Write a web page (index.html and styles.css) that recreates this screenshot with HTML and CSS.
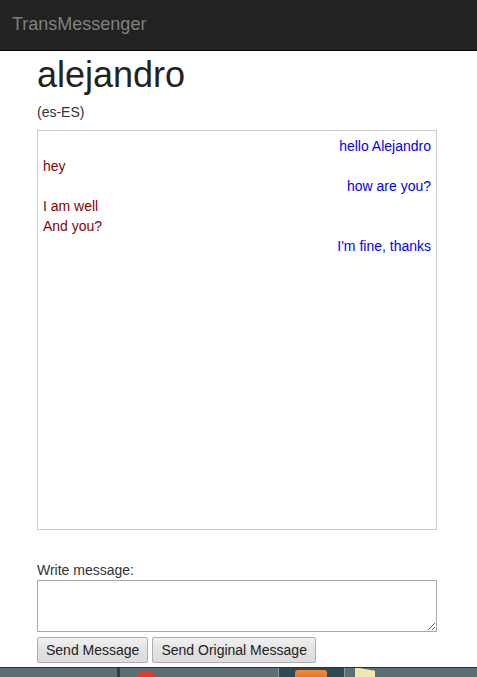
FILE: index.html
```html
<!DOCTYPE html>
<html>
<head>
<meta charset="utf-8">
<title>TransMessenger</title>
<link rel="stylesheet" href="styles.css">
</head>
<body>
<nav class="navbar"><span class="brand">TransMessenger</span></nav>
<main class="container">
  <h1 class="title">alejandro</h1>
  <p class="lang">(es-ES)</p>
  <div class="chat">
    <div class="msg out">hello Alejandro</div>
    <div class="msg in">hey</div>
    <div class="msg out">how are you?</div>
    <div class="msg in">I am well</div>
    <div class="msg in">And you?</div>
    <div class="msg out">I'm fine, thanks</div>
  </div>
  <form class="compose">
    <label class="label" for="m">Write message:</label>
    <textarea id="m" class="input"></textarea>
    <div class="buttons">
      <button type="button" class="btn">Send Message</button>
      <button type="button" class="btn">Send Original Message</button>
    </div>
  </form>
</main>
<div class="taskbar">
  <div class="tb-seg tb-a"></div>
  <div class="tb-seg tb-b"><span class="tb-red"></span></div>
  <div class="tb-seg tb-c"><span class="tb-orange"></span></div>
  <div class="tb-seg tb-d"><span class="tb-env"></span></div>
</div>
</body>
</html>
```
FILE: styles.css
```css
* { box-sizing: border-box; }
html, body { margin: 0; padding: 0; }
body {
  font-family: "Liberation Sans", Arial, sans-serif;
  font-size: 14px;
  line-height: 20px;
  color: #333;
  background: #fff;
  height: 677px;
  overflow: hidden;
}
.navbar {
  height: 51px;
  background: #222;
  border-bottom: 1px solid #080808;
  display: flex;
  align-items: center;
  padding: 0 12px;
}
.brand {
  color: #808080;
  font-size: 18px;
  line-height: 20px;
  margin-top: -2px;
}
.container {
  padding: 0 40px 0 37px;
}
.title {
  margin: 4px 0 0;
  font-size: 36px;
  font-weight: 500;
  line-height: 40px;
  color: #222;
}
.lang {
  margin: 7px 0 0;
  line-height: 20px;
}
.chat {
  margin-top: 8px;
  height: 400px;
  border: 1px solid #ccc;
  padding: 5px;
}
.msg { line-height: 20px; }
.out { text-align: right; color: #0000ff; }
.in { color: #8b0000; }
.compose {
  margin-top: 30px;
  display: flex;
  flex-direction: column;
}
.label {
  line-height: 20px;
  color: #333;
}
.input {
  display: block;
  width: 400px;
  height: 52px;
  margin: 0;
  border: 1px solid #a9a9a9;
  resize: both;
  font-family: inherit;
}
.buttons {
  display: flex;
  gap: 4px;
  margin-top: 5px;
}
.btn {
  height: 26px;
  padding: 0 8px;
  font-family: "Liberation Sans", Arial, sans-serif;
  font-size: 14px;
  color: #222;
  border: 1px solid #adadad;
  border-radius: 2px;
  background: linear-gradient(#f2f2f2, #e2e2e2 50%, #dcdcdc);
}
.taskbar {
  position: fixed;
  left: 0;
  right: 0;
  bottom: 0;
  height: 10px;
  display: flex;
  background: #2c3e44;
  border-top: 1px solid #24343a;
  overflow: hidden;
}
.tb-seg { position: relative; height: 100%; flex: none; }
.tb-a { width: 120px; background: #5b6e72; border-right: 3px solid #2e3f44; }
.tb-b { width: 159px; background: #5b6e72; border-right: 1px solid #8a9a9e; }
.tb-c { width: 66px; background: #2f4a52; border-right: 1px solid #8a9a9e; }
.tb-d { flex: 1; background: #5b6e72; }
.tb-red {
  position: absolute; left: 14px; top: 3px;
  width: 24px; height: 24px; border-radius: 50%;
  background: #e23a2c;
}
.tb-orange {
  position: absolute; left: 16px; top: 2px;
  width: 32px; height: 20px; border-radius: 3px;
  background: linear-gradient(#f08a3a, #d2561a);
}
.tb-env {
  position: absolute; left: 10px; top: 1px;
  width: 20px; height: 14px;
  background: #f3e7b0;
  transform: skewY(10deg);
}
```
